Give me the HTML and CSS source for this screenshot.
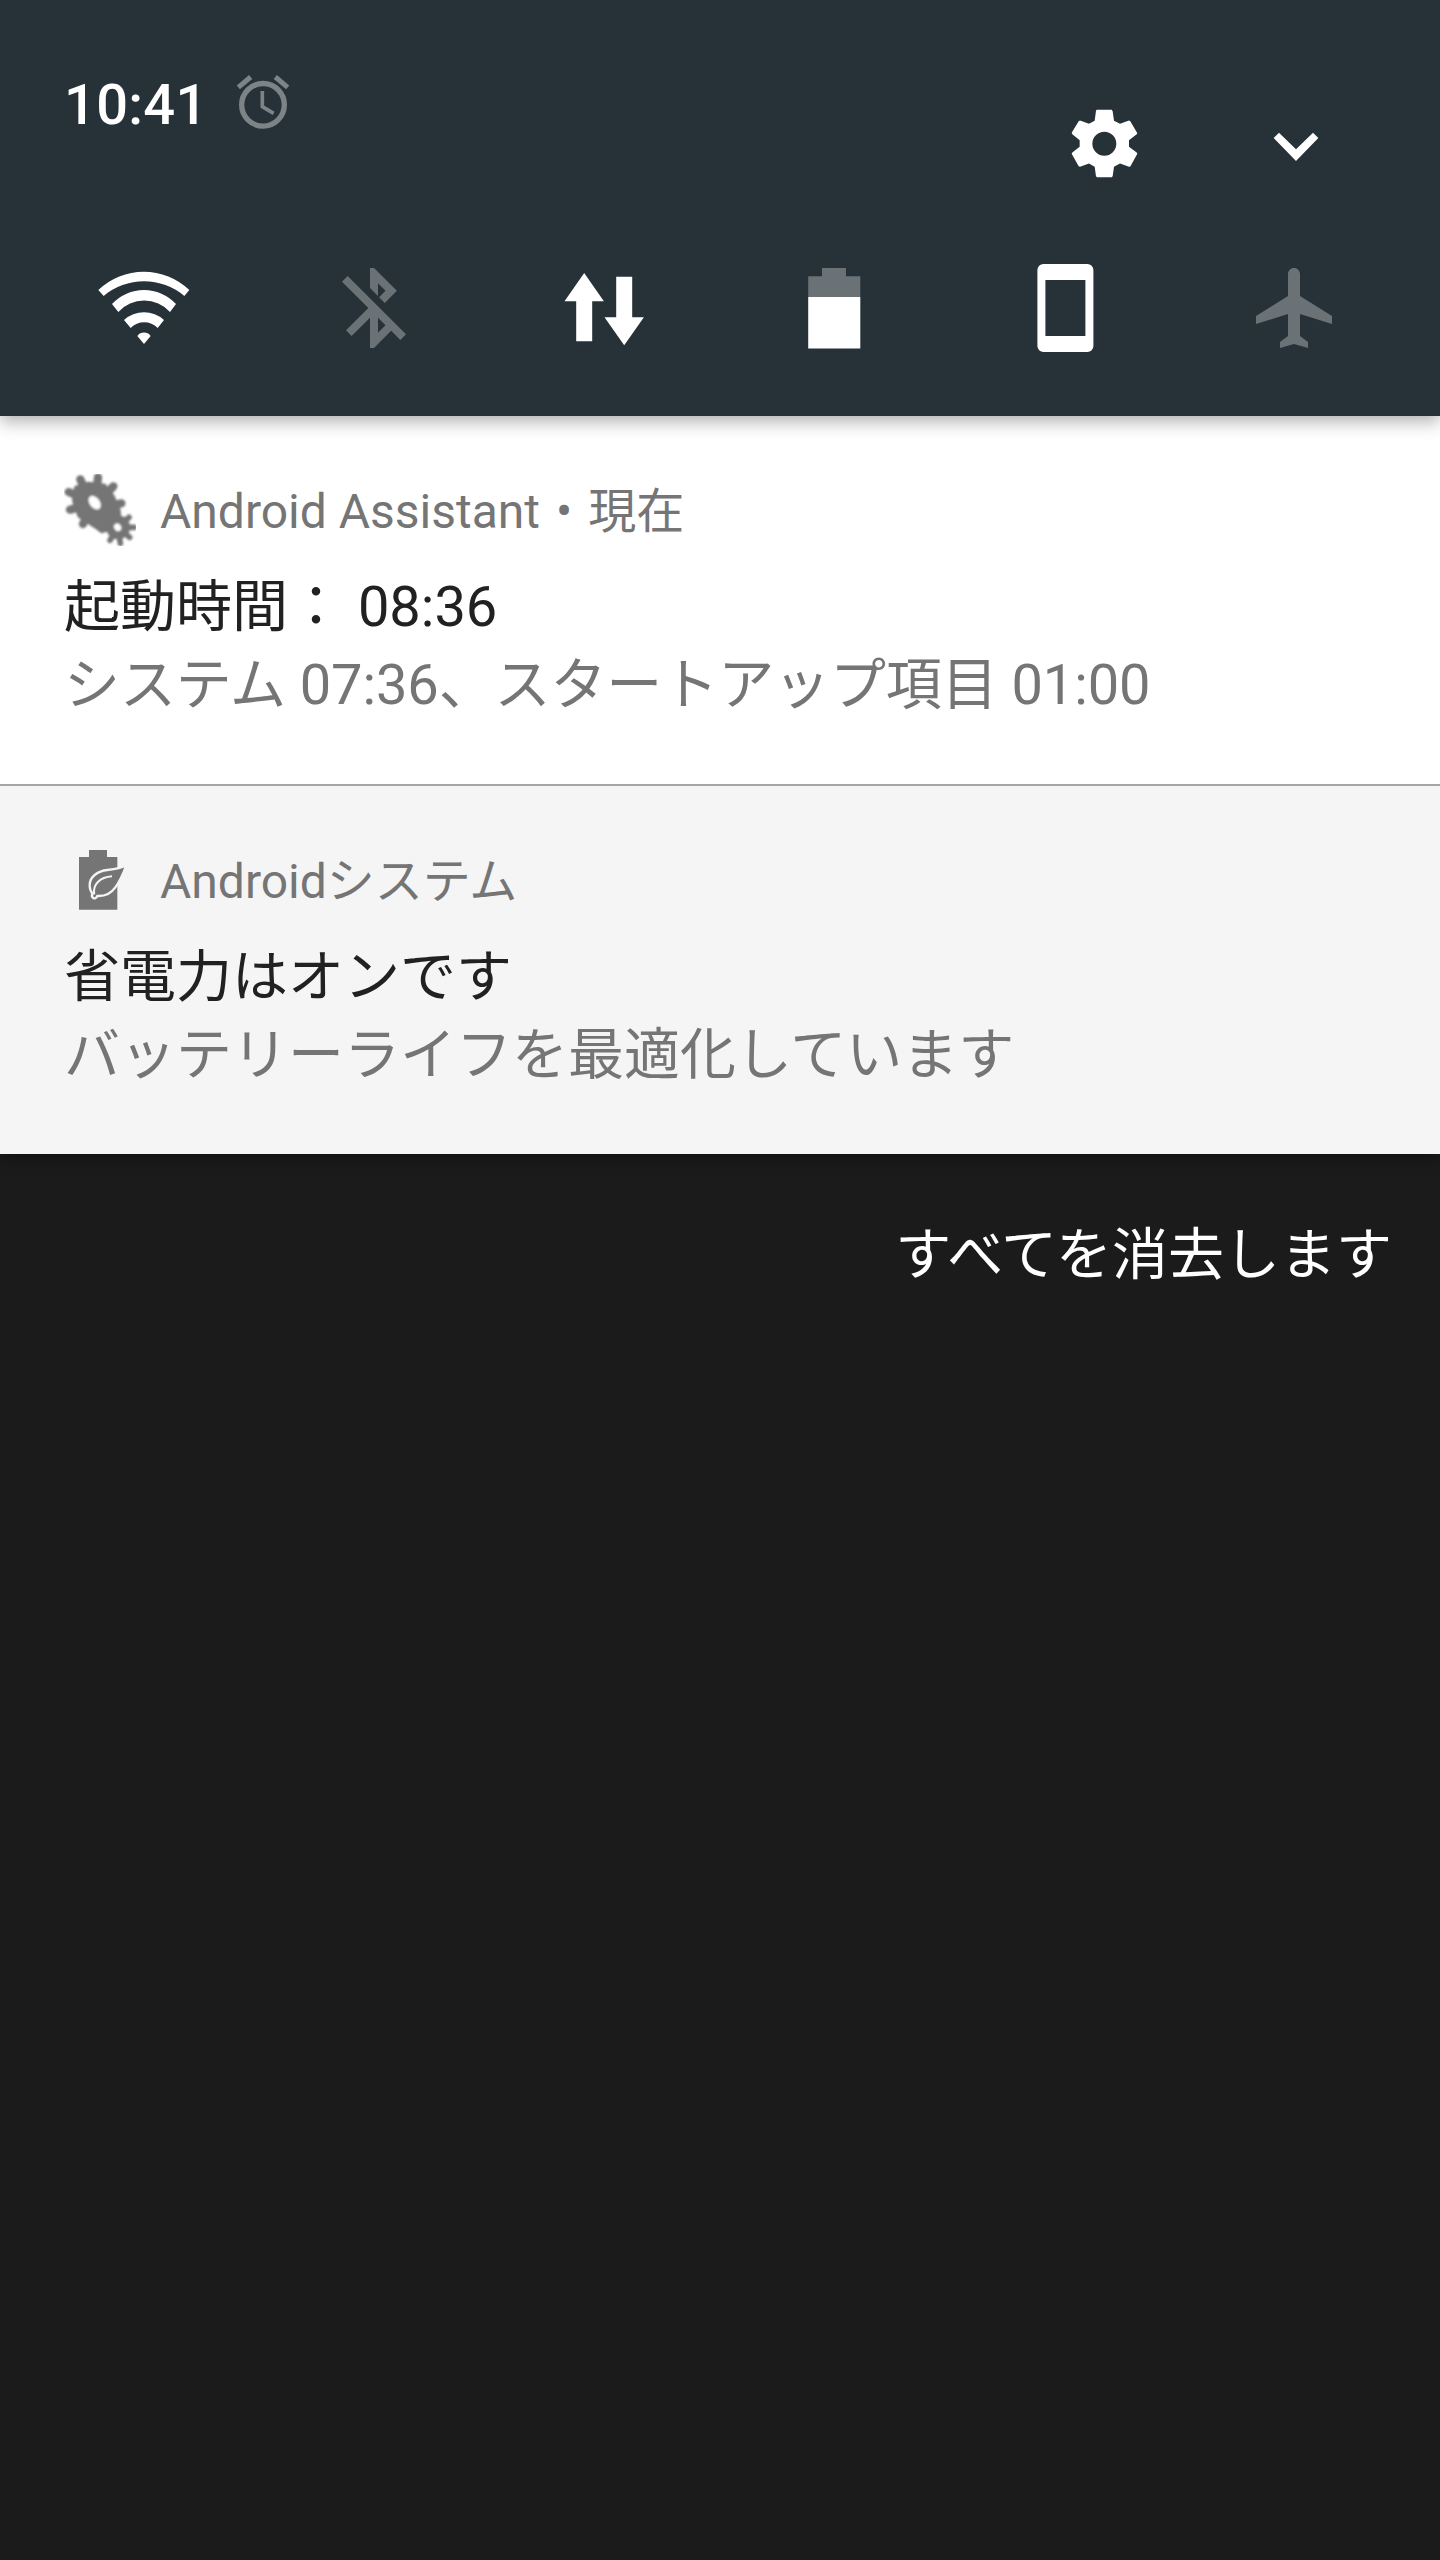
FILE: index.html
```html
<!DOCTYPE html>
<html lang="ja">
<head>
<meta charset="utf-8">
<title>通知</title>
<link rel="stylesheet" href="styles.css">
</head>
<body>
<header class="panel">
  <div class="status">
    <div class="clock">
      <span class="time">10:41</span>
      <svg class="alarm" viewBox="588 72 162 168"><g fill="none" stroke="#7d8487"><circle cx="669" cy="164.500" r="64" stroke-width="16"/><path d="M667 123V170L701 190" stroke-width="11"/><path d="M595 112L632 81M743 112L706 81" stroke-width="15"/></g></svg>
    </div>
    <div class="actions">
      <svg class="gear" viewBox="92 58 201 206"><path fill="#fff" fill-rule="evenodd" d="M169 60H214L217 64L221 93L239 102L266 92L270 94L291 130L289 133L266 151V171L289 188L291 192L270 230L266 231L239 221L221 231L217 259L214 262H170L167 259L163 231L146 221L119 231L115 229L94 192L96 188L118 171V151L96 133L94 129L115 94L119 92L146 102L163 93L167 63ZM192 126A36 36 0 1 0 192 198A36 36 0 1 0 192 126Z"/></svg>
      <svg class="chevron" viewBox="699 128 138 90"><path fill="#fff" d="M717 130L768 180L819 130L835 146L768 215L701 146Z"/></svg>
    </div>
  </div>
  <nav class="tiles">
    <svg class="tile" viewBox="48 30 288 288"><path fill="#fff" d="M55 120A197 197 0 0 1 328 120L313 138A188 188 0 0 0 71 138ZM96 162A131 131 0 0 1 288 162L270 186A105 105 0 0 0 115 186ZM132 210A90 90 0 0 1 252 210L233 234A57 57 0 0 0 152 234ZM172 258A24 24 0 0 1 212 258L192 282Z"/></svg>
    <svg class="tile off" viewBox="0 0 24 24"><path d="M13 5.830l1.880 1.880-1.600 1.600 1.410 1.410 3.020-3.020L12 2h-1v5.030l2 2v-3.200zM5.410 4L4 5.410 10.590 12 5 17.590 6.410 19 11 14.410V22h1l4.290-4.290 2.300 2.290L20 18.590 5.410 4zM13 18.170v-3.760l1.880 1.880L13 18.170z"/></svg>
    <svg class="tile" viewBox="0 0 96 96"><path fill="#fff" d="M27.200 13L46.900 41.300H35.200V81.300H19.200V41.300H7.500ZM59.200 16.800H75.200V57.300H86.900L67.200 85.200L47.500 57.300H59.200Z"/></svg>
    <svg class="tile" viewBox="0 0 96 96"><path fill="#6a7275" d="M35 8H59V16.300H73.300V37H21.200V16.300H35Z"/><path fill="#fff" d="M21.200 37H73.300V88.500H21.200Z"/></svg>
    <svg class="tile" viewBox="0.150 0 24 24"><path fill="#fff" fill-rule="evenodd" d="M6.500 1h11A1.500 1.500 0 0 1 19 2.500v19A1.500 1.500 0 0 1 17.500 23h-11A1.500 1.500 0 0 1 5 21.500v-19A1.500 1.500 0 0 1 6.500 1ZM7 5v14h10V5Z"/></svg>
    <svg class="tile off" viewBox="0 0 24 24"><path d="M21 16v-2l-8-5V3.500c0-.83-.67-1.500-1.500-1.500S10 2.670 10 3.500V9l-8 5v2l8-2.500V19l-2 1.500V22l3.500-1 3.500 1v-1.500L13 19v-5.500l8 2.500z"/></svg>
  </nav>
</header>
<main class="list">
  <article class="note">
    <div class="source">
      <svg class="app" viewBox="12 12 216 216">
        <filter id="soft"><feGaussianBlur stdDeviation="2.500"/></filter>
        <g filter="url(#soft)">
          <path fill="#757575" stroke="#757575" stroke-width="4" stroke-linejoin="round" d="M45 50L85 37L135 43L162 78L180 120L182 150L150 180L125 188L103 172L55 140L38 92Z"/>
          <path fill="none" stroke="#757575" stroke-width="25" stroke-linecap="round" d="M75 60L61 28M110 60L114 22M140 70L160 49M165 105L184 100M80 140L69 162M60 110L30 119M60 80L26 66"/>
          <circle cx="174" cy="172" r="36" fill="#757575"/>
          <path fill="none" stroke="#757575" stroke-width="17" stroke-linecap="round" d="M174 172L150 211M174 172L181 220M174 172L209 202M174 172L222 172M174 172L207 142"/>
          <ellipse cx="104" cy="98" rx="15" ry="23" transform="rotate(-38 104 98)" fill="#fff"/>
          <ellipse cx="173" cy="172" rx="10" ry="12" transform="rotate(-38 173 172)" fill="#fff"/>
        </g>
      </svg>
      <span class="name">Android Assistant<span class="dot">•</span>現在</span>
    </div>
    <h2 class="title">起動時間： 08:36</h2>
    <p class="text tight">システム 07:36、スタートアップ項目 01:00</p>
  </article>
  <article class="note quiet">
    <div class="source">
      <svg class="app" viewBox="-18 -3 216 216">
        <path fill="#757575" d="M57 15H111V36H142V194H27V36H57Z"/>
        <path fill="#757575" stroke="#f5f5f5" stroke-width="7" d="M169 61C152 71 132 73 112 75C84 78 59 95 59 120C59 133 62 140 68 146C61 157 75 168 82 153C103 154 122 147 136 127C150 108 160 85 169 61Z"/>
        <path fill="none" stroke="#f5f5f5" stroke-width="6" d="M73 148C67 118 90 97 126 94"/>
      </svg>
      <span class="name">Androidシステム</span>
    </div>
    <h2 class="title">省電力はオンです</h2>
    <p class="text">バッテリーライフを最適化しています</p>
  </article>
</main>
<footer class="clear">すべてを消去します</footer>
</body>
</html>
```
FILE: styles.css
```css
* { box-sizing: border-box; margin: 0; }
body { min-height: 2560px; background: #1b1b1b; font-family: Roboto, "Noto Sans CJK JP", sans-serif; }
svg { display: block; flex: none; }
.panel { position: relative; z-index: 1; height: 416px; background: #263238; box-shadow: 0 6px 16px rgba(0, 0, 0, .3); }
.status { height: 260px; display: flex; justify-content: space-between; padding: 71px 121px 0 64px; }
.clock { display: flex; align-items: flex-start; }
.time { width: 172px; padding-top: 1px; font-size: 56px; line-height: 66px; font-weight: 500; letter-spacing: .3px; color: #fff; }
.alarm { width: 54px; height: 56px; margin-top: 3px; }
.actions { display: flex; }
.gear { width: 67px; height: 69px; margin: 38px 135px 0 0; }
.chevron { width: 46px; height: 30px; margin-top: 61px; }
.tiles { display: flex; justify-content: space-between; padding: 0 96px; }
.tile { width: 96px; height: 96px; }
.off { fill: #6a7275; }
.note { height: 370px; padding: 58px 64px 0; background: #fff; border-bottom: 2px solid #a6a6a6; }
.quiet { height: 368px; background: #f5f5f5; border: 0; }
.list { box-shadow: 0 4px 16px rgba(0, 0, 0, .4); }
.source { height: 72px; display: flex; gap: 24px; font-size: 48px; line-height: 72px; color: #757575; }
.name { padding-top: 2px; }
.dot { margin: 0 16px; }
.app { width: 72px; height: 72px; }
.title, .text { font-size: 56px; font-weight: 400; line-height: 78px; white-space: nowrap; }
.title { margin-top: 22px; color: #212121; }
.text { color: #757575; }
.tight { letter-spacing: -.1px; }
.clear { padding: 62px 48px 0; text-align: right; font-size: 56px; line-height: 78px; color: #fff; }
```
